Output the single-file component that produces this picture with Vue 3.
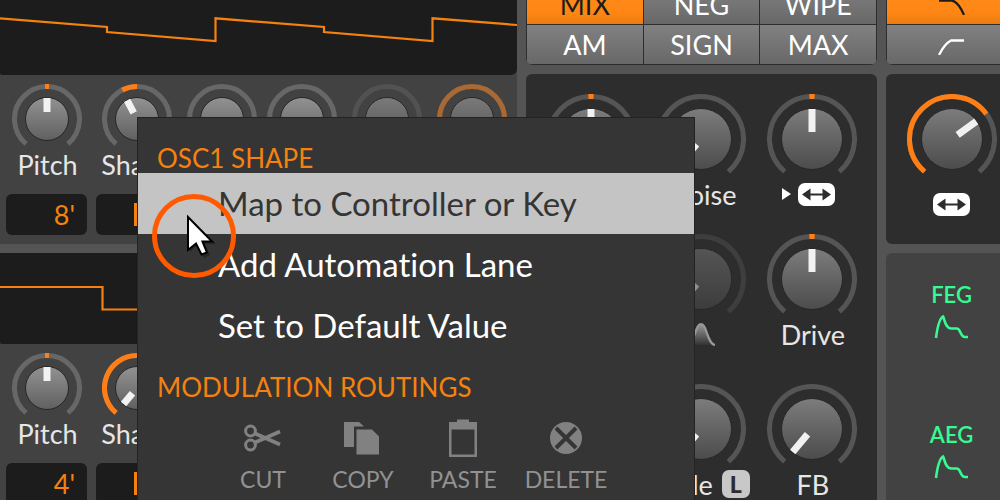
<script setup>
import { h } from 'vue'

const point = (r, deg) => {
  const a = (deg * Math.PI) / 180
  return `${(r * Math.sin(a)).toFixed(2)} ${(-r * Math.cos(a)).toFixed(2)}`
}
const arc = (r, from, to) =>
  `M${point(r, from)}A${r} ${r} 0 ${to - from > 180 ? 1 : 0} 1 ${point(r, to)}`

// Rotary dial: track, value arc, disc and pointer, drawn around the origin.
const Dial = (p) => {
  const size = p.big ? 90 : 70
  const r = size / 2
  const ring = r - 2.5
  const disc = p.big ? 30 : 21
  return h('svg', { width: size, height: size, viewBox: `${-r} ${-r} ${size} ${size}`, 'aria-hidden': 'true' }, [
    h('path', {
      d: arc(ring, -140, 140), fill: 'none', 'stroke-width': 5,
      stroke: p.big ? '#555' : '#676767', opacity: p.dim ? 0.45 : 1
    }),
    p.fill && h('path', {
      d: arc(ring, p.fill[0], p.fill[1]), fill: 'none', stroke: '#ff7f16', 'stroke-width': 5, opacity: p.dim ? 0.5 : 1
    }),
    h('circle', {
      r: disc + 0.5, fill: p.big ? 'url(#discBig)' : 'url(#discSmall)',
      stroke: '#262626', 'stroke-width': 1
    }),
    h('rect', {
      x: -3.5, y: -disc, width: 7, height: p.big ? 23 : 14, fill: '#f2f2f2',
      transform: `rotate(${p.angle || 0})`
    }),
    p.dim && h('circle', { r: disc, fill: p.big ? '#2d2d2d' : '#424242', opacity: p.big ? 0.5 : 0.3 })
  ])
}
Dial.props = { big: Boolean, dim: Boolean, fill: Array, angle: Number }

const tick = [-3.5, 3.5]
const oscillators = [
  {
    id: 'osc1', octave: "8'", height: 75, view: '0 0 517 75',
    wave: 'M0 18.3L107 27V32L215.5 41V18.3L324 27V32L432.5 41V18.3L517 25',
    knobs: [
      { name: 'Pitch', fill: tick, angle: 0 },
      { name: 'Shape', fill: [-27, 0], angle: -28 },
      { name: 'Sub', angle: -140 },
      { name: 'Sync', angle: -140 },
      { name: 'Width', angle: -140, dim: true },
      { name: 'Uni', angle: 140, fill: [-140, 140], dim: true }
    ]
  },
  {
    id: 'osc2', octave: "4'", height: 91, view: '0 0 517 91',
    wave: 'M0 34H102.5V56.5H320V34H517',
    knobs: [
      { name: 'Pitch', fill: tick, angle: 0 },
      { name: 'Shape', fill: [-140, 0], angle: -140 }
    ]
  }
]

const modes = ['MIX', 'NEG', 'WIPE', 'AM', 'SIGN', 'MAX']
const mixer = [
  { name: 'Blend', fill: tick, angle: 0 },
  { name: 'Noise', angle: -140 },
  { name: 'Link', fill: tick, angle: 0, kind: 'link' },
  { name: 'Level', fill: tick, angle: 0 },
  { name: 'Curve', angle: -140, dim: true, kind: 'bell' },
  { name: 'Drive', fill: tick, angle: 0 },
  { name: 'Amount', angle: 0 },
  { name: 'Cycle', angle: -140, kind: 'lock' },
  { name: 'FB', angle: -140 }
]
const entries = ['Map to Controller or Key', 'Add Automation Lane', 'Set to Default Value']
</script>

<template>
  <main class="synth">
    <svg class="defs" width="0" height="0" aria-hidden="true">
      <defs>
        <linearGradient id="discSmall" x2="0" y2="1"><stop stop-color="#929292" /><stop offset="1" stop-color="#606060" /></linearGradient>
        <linearGradient id="discBig" x2="0" y2="1"><stop stop-color="#7c7c7c" /><stop offset="1" stop-color="#4c4c4c" /></linearGradient>
        <linearGradient id="bellFill" x2="0" y2="1"><stop stop-color="#999" /><stop offset="1" stop-color="#333" /></linearGradient>
      </defs>
    </svg>

    <div class="column">
      <section v-for="osc in oscillators" :key="osc.id" class="osc">
        <svg class="scope" :viewBox="osc.view" width="100%" :height="osc.height" preserveAspectRatio="none">
          <path :d="osc.wave" fill="none" stroke="#f5820f" stroke-width="2.2" />
        </svg>
        <div class="osc-knobs">
          <label v-for="k in osc.knobs" :key="k.name" class="knob">
            <Dial v-bind="k" />
            <input type="range" min="-140" max="140" :value="k.angle">
            <span class="small-label">{{ k.name }}</span>
          </label>
        </div>
        <div class="fields">
          <button class="field" type="button">{{ osc.octave }}</button>
          <button class="field meter" type="button" aria-label="Shape modulation"><i></i></button>
        </div>
      </section>
    </div>

    <div class="column">
      <div class="modes">
        <div class="mode-grid">
          <button v-for="m in modes" :key="m" type="button" :class="{ on: m === 'MIX' }">{{ m }}</button>
        </div>
      </div>
      <section class="mixer">
        <label v-for="k in mixer" :key="k.name" class="knob">
          <Dial big v-bind="k" />
          <input type="range" min="-140" max="140" :value="k.angle">
          <span v-if="k.kind === 'link'" class="caption link">
            <svg width="9" height="12" viewBox="0 0 9 12"><path d="M0 0L9 6L0 12Z" fill="#fff" /></svg>
            <svg width="37" height="23" viewBox="0 0 37 23"><rect width="37" height="23" rx="7" fill="#fff" /><path d="M4 11.5L12.500 5.500V10.500H24.500V5.500L33 11.500L24.500 17.500V12.500H12.500V17.500Z" fill="#2d2d2d" /></svg>
          </span>
          <span v-else-if="k.kind === 'bell'" class="caption bell">
            <svg width="32" height="25" viewBox="0 0 32 25">
              <path d="M2 23C10 22 10 2 16 2S22 22 30 23Z" fill="url(#bellFill)" />
              <path d="M2 23C10 22 10 2 16 2S22 22 30 23" fill="none" stroke="#999" stroke-width="2.200" />
            </svg>
          </span>
          <span v-else class="caption" :class="k.kind">{{ k.name }}<b v-if="k.kind === 'lock'">L</b></span>
        </label>
      </section>
    </div>

    <div class="column side">
      <div class="modes">
        <div class="mode-grid single">
          <button type="button" class="on" aria-label="Low-pass"><svg width="28" height="20" viewBox="0 0 28 20"><path d="M1 5.500H14C19 6.500 23 13 26 20" fill="none" stroke="#1c1c1c" stroke-width="2.300" /></svg></button>
          <button type="button" aria-label="High-pass"><svg width="28" height="20" viewBox="0 0 28 20"><path d="M1 20C4 14 8 8 13 5.500H26" fill="none" stroke="#fff" stroke-width="2.300" /></svg></button>
        </div>
      </div>
      <section class="cutoff">
        <label class="knob">
          <Dial big :fill="[-140, 54]" :angle="54" />
          <input type="range" min="-140" max="140" value="54" aria-label="Cutoff">
        </label>
        <svg class="badge" width="37" height="23" viewBox="0 0 37 23"><rect width="37" height="23" rx="7" fill="#fff" /><path d="M4 11.500L12.500 5.500V10.500H24.500V5.500L33 11.500L24.500 17.500V12.500H12.500V17.500Z" fill="#2d2d2d" /></svg>
      </section>
      <section class="envelopes">
        <button v-for="e in ['FEG', 'AEG']" :key="e" type="button">
          <span>{{ e }}</span>
          <svg width="35" height="25" viewBox="0 0 35 25"><path d="M2 24C3 16 5 5 9 2.500C11 6 11 14 17 14.500H23C27 15 26 23 31 23H34" fill="none" stroke="#36fa92" stroke-width="2.600" /></svg>
        </button>
      </section>
    </div>

    <div class="menu" role="menu">
      <h2>OSC1 SHAPE</h2>
      <button v-for="(e, i) in entries" :key="e" type="button" role="menuitem" class="entry" :class="{ active: i === 0 }">{{ e }}</button>
      <h2>MODULATION ROUTINGS</h2>
      <div class="actions">
        <button type="button">
          <svg width="40" height="40" viewBox="0 0 40 40"><g fill="none" stroke="#818181" stroke-width="3"><circle cx="7.500" cy="13" r="4.900" /><circle cx="7.500" cy="27" r="4.900" /><path d="M12 15.500L37 26.500M12 24.500L37 13.500" stroke-width="3.600" /></g></svg>
          CUT
        </button>
        <button type="button">
          <svg width="40" height="40" viewBox="0 0 40 40"><path d="M1 4H16L21 8.500H11V29H1ZM13.500 11.500H29L36 18.500V36.500H13.500Z" fill="#818181" /></svg>
          COPY
        </button>
        <button type="button">
          <svg width="40" height="40" viewBox="0 0 40 40"><path fill-rule="evenodd" d="M6 4H14V1.500H26V4H34V39H6ZM8.500 11.500V36.500H31.500V11.500Z" fill="#818181" /></svg>
          PASTE
        </button>
        <button type="button">
          <svg width="40" height="40" viewBox="0 0 40 40"><circle cx="20" cy="20" r="16" fill="#818181" /><path d="M10 10L30 30M30 10L10 30" stroke="#353535" stroke-width="4" /></svg>
          DELETE
        </button>
      </div>
    </div>

    <svg class="pointer" width="84" height="84" viewBox="0 0 84 84" aria-hidden="true">
      <circle cx="42" cy="42" r="39.500" fill="none" stroke="#ff5a00" stroke-width="5" />
      <path d="M38 24V58L45 51.500L52 64L58 61L52 50H64Z" fill="#000" opacity=".3" />
      <path d="M36 23V56L44 49.500L49.500 60.500L55 58.500L50.500 47.500H60Z" fill="#fff" stroke="#000" stroke-width="2" />
    </svg>
  </main>
</template>

<style>
body { background: #545454; }
</style>

<style scoped>
.synth {
  position: relative;
  display: grid;
  grid-template-columns: minmax(0, 517fr) minmax(0, 351fr) minmax(0, 114fr);
  gap: 9px;
  height: 100vh;
  overflow: hidden;
  background: #545454;
  font-family: Lato, sans-serif;
  font-variant-ligatures: none;
  color: #e6e6e6;
}
.synth * { box-sizing: border-box; }
.defs { position: absolute; }
button {
  font: inherit;
  font-variant-ligatures: none;
  color: inherit;
  border: 0;
  padding: 0;
  margin: 0;
  background: none;
}
svg { display: block; flex: none; }
.column { display: flex; flex-direction: column; gap: 9px; min-height: 0; }

.osc { background: #424242; padding-bottom: 9px; }
.scope { background: #1c1c1c; border-radius: 0 0 6px 2px; }
.osc-knobs {
  display: grid;
  grid-template-columns: 93fr 87fr 83fr 77fr 93fr 77fr 7fr;
  padding-top: 9px;
}
.knob {
  position: relative;
  display: flex;
  flex-direction: column;
  align-items: center;
  font-size: 27px;
}
.knob input {
  position: absolute;
  top: 0;
  width: 70px;
  height: 70px;
  margin: 0;
  opacity: 0;
}
.small-label { height: 40px; line-height: 22px; padding-left: 2px; }
.fields { display: flex; gap: 9px; padding-left: 6px; }
.field {
  width: 81px;
  height: 41px;
  padding: 0 12px;
  border-radius: 6px;
  background: #1c1c1c;
  color: #f5820f;
  font-size: 27px;
  text-align: right;
}
.meter i { display: block; width: 5px; height: 23px; margin: 0 auto; background: #f5820f; }

.modes { flex: none; display: flex; align-items: flex-end; height: 65px; overflow: hidden; }
.mode-grid {
  flex: 1;
  display: grid;
  grid-template-columns: repeat(3, 1fr);
  gap: 1px;
  padding: 1px;
  background: #2d2d2d;
  border-radius: 7px;
  overflow: hidden;
}
.mode-grid button {
  display: flex;
  align-items: center;
  justify-content: center;
  height: 39px;
  font-size: 27px;
  color: #fff;
  background: linear-gradient(#818181, #686868);
}
.mode-grid .on { background: linear-gradient(#ff8c1c, #ff8614 70%, #ec7c10); color: #1c1c1c; }
.mode-grid.single { grid-template-columns: 1fr; }

.mixer {
  flex: 1;
  display: grid;
  grid-template-columns: repeat(3, 1fr);
  grid-template-rows: 140px 150px 140px;
  padding: 20px 10px 0;
  background: #2d2d2d;
  border-radius: 6px;
}
.caption {
  display: flex;
  align-items: center;
  height: 20px;
  padding-left: 2px;
}
.caption b {
  width: 28px;
  height: 28px;
  margin-left: 9px;
  border-radius: 7px;
  background: #c8c8c8;
  color: #2d2d2d;
  font-size: 23px;
  font-weight: 900;
  line-height: 28px;
  text-align: center;
}
.link { gap: 7px; padding: 0 6px 0 0; }
.lock { padding: 0 5px 0 0; }
.bell { padding: 0; }

.side > * { width: 115%; }
.cutoff { flex: none; height: 170px; padding-top: 20px; background: #2d2d2d; border-radius: 6px; }
.badge { margin: 9px auto 0; }
.envelopes { flex: 1; padding-top: 30px; background: #424242; border-radius: 6px; }
.envelopes button {
  display: flex;
  flex-direction: column;
  align-items: center;
  width: 100%;
  height: 140px;
  color: #36fa92;
  font-size: 22px;
  font-weight: 600;
  line-height: 24px;
}
.envelopes svg { margin-top: 7px; }

.menu {
  position: absolute;
  left: 137px;
  top: 117px;
  width: 558px;
  height: 400px;
  border: 1px solid #232323;
  background: #353535;
}
.menu h2 {
  margin: 0;
  padding: 25px 19px 0;
  height: 55px;
  font-size: 26px;
  font-weight: 400;
  line-height: 30px;
  color: #f5820f;
}
.entry {
  display: block;
  width: 100%;
  height: 61px;
  padding: 0 0 1px 80px;
  font-size: 33px;
  text-align: left;
  color: #fff;
}
.entry.active { background: #c4c4c4; color: #353535; }
.menu .entry + h2 { padding-top: 16px; height: 62px; }
.actions { display: grid; grid-template-columns: 100px 100px 100px 106px; padding-left: 75px; }
.actions button {
  display: flex;
  flex-direction: column;
  align-items: center;
  gap: 7px;
  font-size: 23px;
  line-height: 28px;
  color: #929292;
}
.pointer { position: absolute; left: 152px; top: 194px; }
</style>
